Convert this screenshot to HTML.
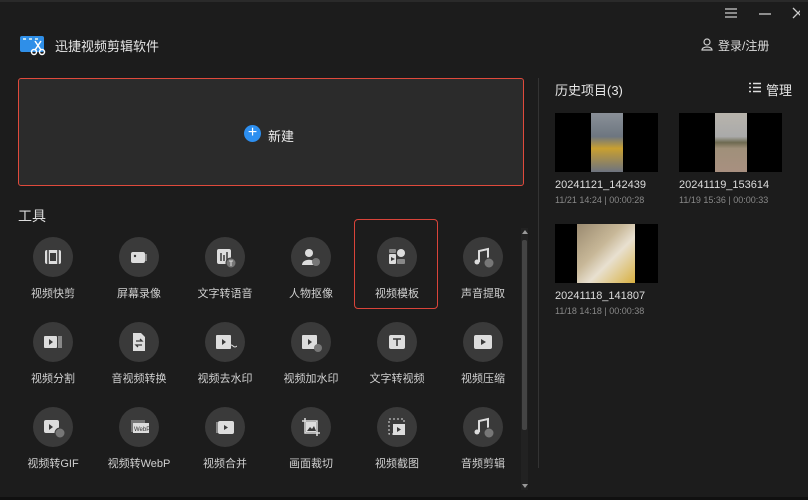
<!DOCTYPE html>
<html><head><meta charset="utf-8"><style>
*{margin:0;padding:0;box-sizing:border-box}
body{width:808px;height:500px;background:#1c1c1c;font-family:"Liberation Sans","Noto Sans CJK SC",sans-serif;color:#ddd;position:relative;overflow:hidden}
.a{position:absolute}
.t{position:absolute;width:86px;text-align:center;font-size:11px;color:#d0d0d0}
.c{position:absolute;width:40px;height:40px;border-radius:50%;background:#3a3a3a}
.c svg{position:absolute;left:10px;top:10px}
.th{position:absolute;width:103px;height:59px;background:#000}
.n{position:absolute;font-size:11px;color:#ddd}
.d{position:absolute;font-size:9px;color:#888}
</style></head><body>
<div class="a" style="left:0;top:0;width:808px;height:2px;background:#2a2a2a"></div>
<div class="a" style="left:0;top:497px;width:808px;height:3px;background:#101010"></div>
<!-- title bar -->
<svg class="a" style="left:720px;top:6px" width="80" height="16"><g stroke="#ccc" stroke-width="1.3"><path d="M5 3h12M5 7h12M5 11h12"/><path d="M39 8h12"/><path d="M73 2l10 10M83 2l-10 10"/></g></svg>
<svg class="a" style="left:19px;top:34px" width="28" height="22"><rect x="1" y="2" width="24" height="16" rx="2" fill="#2f8fe8"/><g fill="#bde"><rect x="4" y="4" width="3" height="2"/><rect x="10" y="4" width="3" height="2"/><rect x="16" y="4" width="3" height="2"/></g><g stroke="#fff" stroke-width="1.5" fill="none"><circle cx="15" cy="18" r="2.5"/><circle cx="23" cy="18" r="2.5"/><path d="M16 16l6-9M22 16l-6-9"/></g></svg>
<div class="a" style="left:55px;top:36px;font-size:13px;color:#e6e6e6">迅捷视频剪辑软件</div>
<svg class="a" style="left:701px;top:38px" width="12" height="13"><g stroke="#ccc" stroke-width="1.2" fill="none"><circle cx="6" cy="4" r="3"/><path d="M1 12c0-4 10-4 10 0z"/></g></svg>
<div class="a" style="left:718px;top:37px;font-size:12px;color:#ddd">登录/注册</div>
<!-- new -->
<div class="a" style="left:18px;top:78px;width:506px;height:108px;background:#2b2b2b;border:1.5px solid #e04a3c;border-radius:3px"></div>
<div class="a" style="left:244px;top:125px;width:17px;height:17px;border-radius:50%;background:#2d8ff0;color:#fff;font-size:16px;line-height:16px;text-align:center">+</div>
<div class="a" style="left:268px;top:126px;font-size:13px;color:#eee">新建</div>
<div class="a" style="left:18px;top:206px;font-size:14px;color:#ddd">工具</div>
<!-- highlight -->
<div class="a" style="left:354px;top:219px;width:84px;height:90px;border:1.5px solid #d9443a;border-radius:4px"></div>
<!-- scrollbar -->
<div class="a" style="left:521px;top:228px;width:7px;height:262px;background:#222"></div>
<div class="a" style="left:522px;top:240px;width:5px;height:190px;background:#444;border-radius:2px"></div>
<svg class="a" style="left:521px;top:228px" width="8" height="262"><path d="M1 6l3-4 3 4z M1 256l3 4 3-4z" fill="#999"/></svg>
<div class="a" style="left:538px;top:78px;width:1px;height:390px;background:#333"></div>

<!-- tools -->
<div id="tools"></div>
<script></script>
<!-- row1 -->
<div class="c" style="left:33px;top:237px"><svg width="20" height="20"><rect x="2" y="3" width="16" height="14" rx="2" fill="#ddd"/><path d="M5 3v14M15 3v14" stroke="#3a3a3a" stroke-width="1.5"/><rect x="7" y="6" width="6" height="8" fill="#3a3a3a"/></svg></div>
<div class="t" style="left:10px;top:285px">视频快剪</div>
<div class="c" style="left:119px;top:237px"><svg width="20" height="20"><rect x="2" y="5" width="14" height="11" rx="2" fill="#ddd"/><rect x="16" y="7" width="2" height="7" fill="#888"/><circle cx="6" cy="9" r="1.2" fill="#3a3a3a"/></svg></div>
<div class="t" style="left:96px;top:285px">屏幕录像</div>
<div class="c" style="left:205px;top:237px"><svg width="22" height="22"><rect x="2" y="2" width="14" height="15" rx="2" fill="#ddd"/><path d="M6 6v8M9 8v6M12 5v9" stroke="#3a3a3a" stroke-width="1.5"/><circle cx="16" cy="16" r="5" fill="#777" stroke="#3a3a3a"/><path d="M14 14h4M16 14v5" stroke="#ddd"/></svg></div>
<div class="t" style="left:182px;top:285px">文字转语音</div>
<div class="c" style="left:291px;top:237px"><svg width="20" height="20"><circle cx="8" cy="6" r="4" fill="#ddd"/><path d="M1 18c0-7 14-7 14 0z" fill="#ddd"/><circle cx="15" cy="15" r="4" fill="#777"/></svg></div>
<div class="t" style="left:268px;top:285px">人物抠像</div>
<div class="c" style="left:377px;top:237px"><svg width="20" height="20"><rect x="2" y="2" width="7" height="4" rx="1" fill="#888"/><rect x="2" y="7" width="7" height="10" rx="1" fill="#ddd"/><path d="M4 10l4 2-4 2z" fill="#3a3a3a"/><circle cx="14" cy="6" r="4" fill="#ddd"/><rect x="10" y="12" width="8" height="5" rx="1" fill="#888"/></svg></div>
<div class="t" style="left:354px;top:285px">视频模板</div>
<div class="c" style="left:463px;top:237px"><svg width="22" height="22"><path d="M6 15V4l9-2v10" stroke="#ddd" stroke-width="2" fill="none"/><circle cx="4" cy="15" r="2.5" fill="#ddd"/><circle cx="16" cy="16" r="5" fill="#777" stroke="#3a3a3a"/></svg></div>
<div class="t" style="left:440px;top:285px">声音提取</div>
<!-- row2 -->
<div class="c" style="left:33px;top:322px"><svg width="20" height="20"><rect x="1" y="4" width="13" height="12" rx="1" fill="#ddd"/><rect x="15" y="4" width="4" height="12" fill="#888"/><path d="M6 7l4 3-4 3z" fill="#3a3a3a"/></svg></div>
<div class="t" style="left:10px;top:370px">视频分割</div>
<div class="c" style="left:119px;top:322px"><svg width="20" height="20"><path d="M4 1h8l4 4v14H4z" fill="#ddd"/><path d="M7 9h6l-2-2M13 13H7l2 2" stroke="#3a3a3a" stroke-width="1.3" fill="none"/></svg></div>
<div class="t" style="left:96px;top:370px">音视频转换</div>
<div class="c" style="left:205px;top:322px"><svg width="22" height="20"><rect x="1" y="3" width="15" height="14" rx="1" fill="#ddd"/><path d="M7 7l4 3-4 3z" fill="#3a3a3a"/><path d="M14 14q2-2 4 0t4 0" stroke="#ddd" fill="none"/></svg></div>
<div class="t" style="left:182px;top:370px">视频去水印</div>
<div class="c" style="left:291px;top:322px"><svg width="22" height="22"><rect x="1" y="3" width="15" height="14" rx="1" fill="#ddd"/><path d="M7 7l4 3-4 3z" fill="#3a3a3a"/><circle cx="17" cy="16" r="4" fill="#777"/></svg></div>
<div class="t" style="left:268px;top:370px">视频加水印</div>
<div class="c" style="left:377px;top:322px"><svg width="20" height="20"><rect x="2" y="3" width="16" height="14" rx="2" fill="#ddd"/><path d="M6 7h8M10 7v7" stroke="#3a3a3a" stroke-width="1.6"/></svg></div>
<div class="t" style="left:354px;top:370px">文字转视频</div>
<div class="c" style="left:463px;top:322px"><svg width="20" height="20"><rect x="1" y="3" width="18" height="14" rx="2" fill="#ddd"/><path d="M8 7l5 3-5 3z" fill="#3a3a3a"/></svg></div>
<div class="t" style="left:440px;top:370px">视频压缩</div>
<!-- row3 -->
<div class="c" style="left:33px;top:407px"><svg width="22" height="22"><rect x="1" y="3" width="15" height="13" rx="2" fill="#ddd"/><path d="M6 7l4 3-4 3z" fill="#3a3a3a"/><circle cx="17" cy="16" r="5" fill="#777" stroke="#3a3a3a"/></svg></div>
<div class="t" style="left:10px;top:455px">视频转GIF</div>
<div class="c" style="left:119px;top:407px"><svg width="22" height="20"><rect x="2" y="3" width="14" height="12" fill="#777"/><rect x="4" y="6" width="16" height="10" fill="#ddd"/><text x="5" y="14" font-size="6" fill="#333" font-family="Liberation Sans">WebP</text></svg></div>
<div class="t" style="left:96px;top:455px">视频转WebP</div>
<div class="c" style="left:205px;top:407px"><svg width="20" height="20"><rect x="1" y="5" width="5" height="11" fill="#888"/><rect x="3" y="4" width="16" height="13" rx="2" fill="#ddd"/><path d="M9 8l4 2.5-4 2.5z" fill="#3a3a3a"/></svg></div>
<div class="t" style="left:182px;top:455px">视频合并</div>
<div class="c" style="left:291px;top:407px"><svg width="20" height="20"><path d="M4 1v15h15M1 4h15v15" stroke="#ddd" stroke-width="1.5" fill="none"/><rect x="5" y="5" width="10" height="10" fill="#ddd"/><path d="M6 14l3-4 2 2 2-3 2 5z" fill="#3a3a3a"/></svg></div>
<div class="t" style="left:268px;top:455px">画面裁切</div>
<div class="c" style="left:377px;top:407px"><svg width="20" height="20"><rect x="2" y="2" width="15" height="15" stroke="#ddd" stroke-dasharray="2 2" fill="none"/><rect x="6" y="7" width="12" height="11" fill="#ddd"/><path d="M10 10l4 2.5-4 2.5z" fill="#3a3a3a"/></svg></div>
<div class="t" style="left:354px;top:455px">视频截图</div>
<div class="c" style="left:463px;top:407px"><svg width="22" height="22"><path d="M6 15V4l9-2v10" stroke="#ddd" stroke-width="2" fill="none"/><circle cx="4" cy="15" r="2.5" fill="#ddd"/><circle cx="16" cy="16" r="5" fill="#777" stroke="#3a3a3a"/></svg></div>
<div class="t" style="left:440px;top:455px">音频剪辑</div>

<!-- history -->
<div class="a" style="left:555px;top:80px;font-size:13px;color:#e6e6e6">历史项目(3)</div>
<svg class="a" style="left:749px;top:82px" width="12" height="11"><path d="M0 1.5h2M4 1.5h8M0 5.5h2M4 5.5h8M0 9.5h2M4 9.5h8" stroke="#ddd" stroke-width="1.5"/></svg>
<div class="a" style="left:766px;top:80px;font-size:13px;color:#e6e6e6">管理</div>
<div class="th" style="left:555px;top:113px"><div class="a" style="left:36px;top:0;width:32px;height:59px;background:linear-gradient(#8a9098 0%,#6d7680 40%,#c9a030 60%,#6d7380 100%)"></div></div>
<div class="n" style="left:555px;top:179px">20241121_142439</div>
<div class="d" style="left:555px;top:195px">11/21 14:24 | 00:00:28</div>
<div class="th" style="left:679px;top:113px"><div class="a" style="left:36px;top:0;width:32px;height:59px;background:linear-gradient(#b8b4ac 0%,#aaa 40%,#6e6a50 50%,#a0907a 60%,#a89080 100%)"></div></div>
<div class="n" style="left:679px;top:179px">20241119_153614</div>
<div class="d" style="left:679px;top:195px">11/19 15:36 | 00:00:33</div>
<div class="th" style="left:555px;top:224px"><div class="a" style="left:22px;top:0;width:58px;height:59px;background:linear-gradient(135deg,#9a8a70 0%,#c8b898 40%,#e8e0d0 60%,#d8b040 100%)"></div></div>
<div class="n" style="left:555px;top:290px">20241118_141807</div>
<div class="d" style="left:555px;top:306px">11/18 14:18 | 00:00:38</div>
</body></html>
